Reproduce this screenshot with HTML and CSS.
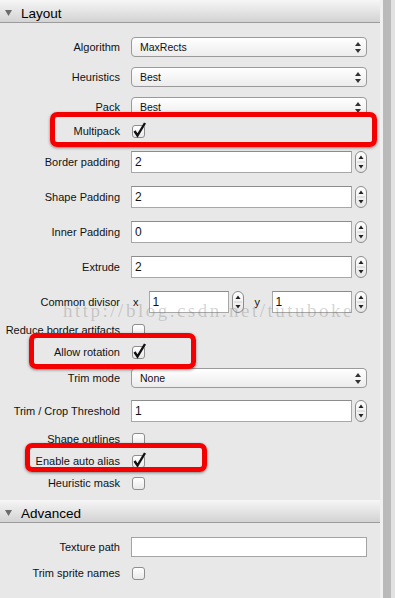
FILE: index.html
```html
<!DOCTYPE html>
<html lang="en">
<head>
    <meta charset="UTF-8">
    <title>Layout settings</title>
    <link rel="stylesheet" href="styles.css">
</head>
<body>
    <div class="window">
        <div class="panel">
            <div class="section-header">
                <svg class="disclosure" width="7" height="6" viewBox="0 0 7 6"><polygon points="0,0 7,0 3.5,6" fill="#6c6c6c"/></svg>
                <span>Layout</span>
            </div>
            <div class="section-body">
                <div class="row row-select">
                    <span class="label">Algorithm</span>
                    <div class="select"><span>MaxRects</span>
                        <svg width="6" height="11" viewBox="0 0 6 11"><polygon points="0,4 3,0 6,4" fill="#333"/><polygon points="0,7 6,7 3,11" fill="#333"/></svg>
                    </div>
                </div>
                <div class="row row-select">
                    <span class="label">Heuristics</span>
                    <div class="select"><span>Best</span>
                        <svg width="6" height="11" viewBox="0 0 6 11"><polygon points="0,4 3,0 6,4" fill="#333"/><polygon points="0,7 6,7 3,11" fill="#333"/></svg>
                    </div>
                </div>
                <div class="row row-select">
                    <span class="label">Pack</span>
                    <div class="select"><span>Best</span>
                        <svg width="6" height="11" viewBox="0 0 6 11"><polygon points="0,4 3,0 6,4" fill="#333"/><polygon points="0,7 6,7 3,11" fill="#333"/></svg>
                    </div>
                </div>
                <div class="row row-check row-tight">
                    <span class="label">Multipack</span>
                    <div class="control"><span class="check"><svg viewBox="0 0 15 16"><path d="M2.5 10 L5.5 14.5 L13 2"/></svg></span></div>
                </div>
                <div class="row row-field">
                    <span class="label">Border padding</span>
                    <div class="control">
                        <div class="field">2</div>
                        <span class="spinner"><svg width="10" height="20" viewBox="0 0 10 20"><polygon points="2.5,7 5,3.5 7.5,7" fill="#222"/><line x1="1" y1="10" x2="9" y2="10" stroke="#d0d0d0"/><polygon points="2.5,13 7.5,13 5,16.5" fill="#222"/></svg></span>
                    </div>
                </div>
                <div class="row row-field">
                    <span class="label">Shape Padding</span>
                    <div class="control">
                        <div class="field">2</div>
                        <span class="spinner"><svg width="10" height="20" viewBox="0 0 10 20"><polygon points="2.5,7 5,3.5 7.5,7" fill="#222"/><line x1="1" y1="10" x2="9" y2="10" stroke="#d0d0d0"/><polygon points="2.5,13 7.5,13 5,16.5" fill="#222"/></svg></span>
                    </div>
                </div>
                <div class="row row-field">
                    <span class="label">Inner Padding</span>
                    <div class="control">
                        <div class="field">0</div>
                        <span class="spinner"><svg width="10" height="20" viewBox="0 0 10 20"><polygon points="2.5,7 5,3.5 7.5,7" fill="#222"/><line x1="1" y1="10" x2="9" y2="10" stroke="#d0d0d0"/><polygon points="2.5,13 7.5,13 5,16.5" fill="#222"/></svg></span>
                    </div>
                </div>
                <div class="row row-field">
                    <span class="label">Extrude</span>
                    <div class="control">
                        <div class="field">2</div>
                        <span class="spinner"><svg width="10" height="20" viewBox="0 0 10 20"><polygon points="2.5,7 5,3.5 7.5,7" fill="#222"/><line x1="1" y1="10" x2="9" y2="10" stroke="#d0d0d0"/><polygon points="2.5,13 7.5,13 5,16.5" fill="#222"/></svg></span>
                    </div>
                </div>
                <div class="row row-field">
                    <span class="label">Common divisor</span>
                    <div class="control">
                        <span class="axis">x</span>
                        <div class="field short">1</div>
                        <span class="spinner"><svg width="10" height="20" viewBox="0 0 10 20"><polygon points="2.5,7 5,3.5 7.5,7" fill="#222"/><line x1="1" y1="10" x2="9" y2="10" stroke="#d0d0d0"/><polygon points="2.5,13 7.5,13 5,16.5" fill="#222"/></svg></span>
                        <span class="axis axis-y">y</span>
                        <div class="field short">1</div>
                        <span class="spinner"><svg width="10" height="20" viewBox="0 0 10 20"><polygon points="2.5,7 5,3.5 7.5,7" fill="#222"/><line x1="1" y1="10" x2="9" y2="10" stroke="#d0d0d0"/><polygon points="2.5,13 7.5,13 5,16.5" fill="#222"/></svg></span>
                    </div>
                </div>
                <div class="row row-check">
                    <span class="label">Reduce border artifacts</span>
                    <div class="control"><span class="check"></span></div>
                </div>
                <div class="row row-check">
                    <span class="label">Allow rotation</span>
                    <div class="control"><span class="check"><svg viewBox="0 0 15 16"><path d="M2.5 10 L5.5 14.5 L13 2"/></svg></span></div>
                </div>
                <div class="row row-select">
                    <span class="label">Trim mode</span>
                    <div class="select"><span>None</span>
                        <svg width="6" height="11" viewBox="0 0 6 11"><polygon points="0,4 3,0 6,4" fill="#333"/><polygon points="0,7 6,7 3,11" fill="#333"/></svg>
                    </div>
                </div>
                <div class="row row-field">
                    <span class="label">Trim / Crop Threshold</span>
                    <div class="control">
                        <div class="field">1</div>
                        <span class="spinner"><svg width="10" height="20" viewBox="0 0 10 20"><polygon points="2.5,7 5,3.5 7.5,7" fill="#222"/><line x1="1" y1="10" x2="9" y2="10" stroke="#d0d0d0"/><polygon points="2.5,13 7.5,13 5,16.5" fill="#222"/></svg></span>
                    </div>
                </div>
                <div class="row row-check">
                    <span class="label">Shape outlines</span>
                    <div class="control"><span class="check"></span></div>
                </div>
                <div class="row row-check">
                    <span class="label">Enable auto alias</span>
                    <div class="control"><span class="check"><svg viewBox="0 0 15 16"><path d="M2.5 10 L5.5 14.5 L13 2"/></svg></span></div>
                </div>
                <div class="row row-check">
                    <span class="label">Heuristic mask</span>
                    <div class="control"><span class="check"></span></div>
                </div>
            </div>

            <div class="section-header">
                <svg class="disclosure" width="7" height="6" viewBox="0 0 7 6"><polygon points="0,0 7,0 3.5,6" fill="#6c6c6c"/></svg>
                <span>Advanced</span>
            </div>
            <div class="section-body">
                <div class="row row-select">
                    <span class="label">Texture path</span>
                    <div class="control"><div class="field wide"></div></div>
                </div>
                <div class="row row-check">
                    <span class="label">Trim sprite names</span>
                    <div class="control"><span class="check"></span></div>
                </div>
            </div>

            <!-- annotation boxes drawn over the form -->
            <div class="mark mark-multipack"></div>
            <div class="mark mark-rotation"></div>
            <div class="mark mark-alias"></div>
            <div class="watermark">http://blog.csdn.net/tutuboke</div>
        </div>
        <div class="scrollbar"></div>
    </div>
</body>
</html>
```

FILE: styles.css
```css
body {
    margin: 0;
    background-color: #e8e8e8;
    font-family: "Liberation Sans", Arial, sans-serif;
    font-size: 11px;
    color: #111;
}
.window {
    display: flex;
    height: 598px;
    overflow: hidden;
}
.panel {
    position: relative;
    width: 380px;
    flex: none;
}
.scrollbar {
    flex: 1;
    background: linear-gradient(to right, #f0f0f0 0 3px, #bababa 3px 11px, #e2e2e2 11px);
}
.section-header {
    display: flex;
    align-items: center;
    gap: 9px;
    height: 18px;
    padding: 4px 0 0 5px;
    border-bottom: 1px solid #9c9c9c;
    background: linear-gradient(#f6f6f6, #d3d3d3);
    font-size: 13.5px;
    color: #000;
}
.section-body {
    padding: 9px 0 6px;
}
.row {
    display: grid;
    grid-template-columns: 120px 1fr;
    column-gap: 11px;
    align-items: center;
}
.row-select {
    height: 30px;
}
.row-field {
    height: 35px;
}
.row-check {
    height: 22px;
}
/* the row right under the selects sits a little higher */
.row-tight {
    height: 18px;
    padding-bottom: 4px;
}
.label {
    text-align: right;
    white-space: nowrap;
}
.control {
    display: flex;
    align-items: center;
}
.select {
    box-sizing: border-box;
    width: 236px;
    height: 20px;
    display: flex;
    align-items: center;
    justify-content: space-between;
    padding: 0 5px 0 8px;
    border: 1px solid #9a9a9a;
    border-radius: 4px;
    background: linear-gradient(#ffffff, #ececec);
    font-size: 10.5px;
}
.field {
    box-sizing: border-box;
    width: 221px;
    height: 22px;
    display: flex;
    align-items: center;
    padding-left: 3px;
    border: 1px solid #a8a8a8;
    border-top-color: #8c8c8c;
    background-color: #fff;
    font-size: 12px;
}
.field.short {
    width: 80px;
}
.field.wide {
    width: 236px;
    height: 20px;
    border-color: #a4a4a4;
}
.spinner {
    box-sizing: border-box;
    width: 12px;
    height: 22px;
    margin-left: 3px;
    border: 1px solid #8c8c8c;
    border-radius: 6px;
    background: linear-gradient(#ffffff, #e6e6e6);
    display: flex;
    justify-content: center;
}
.spinner svg {
    flex: none;
}
.axis {
    margin: 0 10px 0 2px;
}
.axis-y {
    margin: 0 11.5px 0 11px;
}
.check {
    position: relative;
    box-sizing: border-box;
    width: 13px;
    height: 13px;
    margin-left: 1px;
    border: 1px solid #8d8d8d;
    border-radius: 3px;
    background: linear-gradient(#ffffff, #e9e9e9);
}
.check svg {
    position: absolute;
    left: -1px;
    top: -5px;
    width: 15px;
    height: 16px;
    overflow: visible;
}
.check path {
    fill: none;
    stroke: #111;
    stroke-width: 2.4;
}
.mark {
    position: absolute;
    box-sizing: border-box;
    border: 5px solid #f50000;
    border-radius: 7px;
    box-shadow: 0 1px 3px rgba(0, 0, 0, 0.45);
}
.mark-multipack {
    left: 50px;
    top: 112px;
    width: 327px;
    height: 35px;
}
.mark-rotation {
    left: 29px;
    top: 333px;
    width: 167px;
    height: 36px;
}
.mark-alias {
    left: 25px;
    top: 443px;
    width: 182px;
    height: 29px;
}
.watermark {
    position: absolute;
    left: 63px;
    top: 301px;
    font-family: "Liberation Serif", serif;
    font-size: 19px;
    line-height: 1;
    letter-spacing: 2.5px;
    color: rgba(110, 110, 110, 0.3);
    white-space: nowrap;
    pointer-events: none;
}
```
